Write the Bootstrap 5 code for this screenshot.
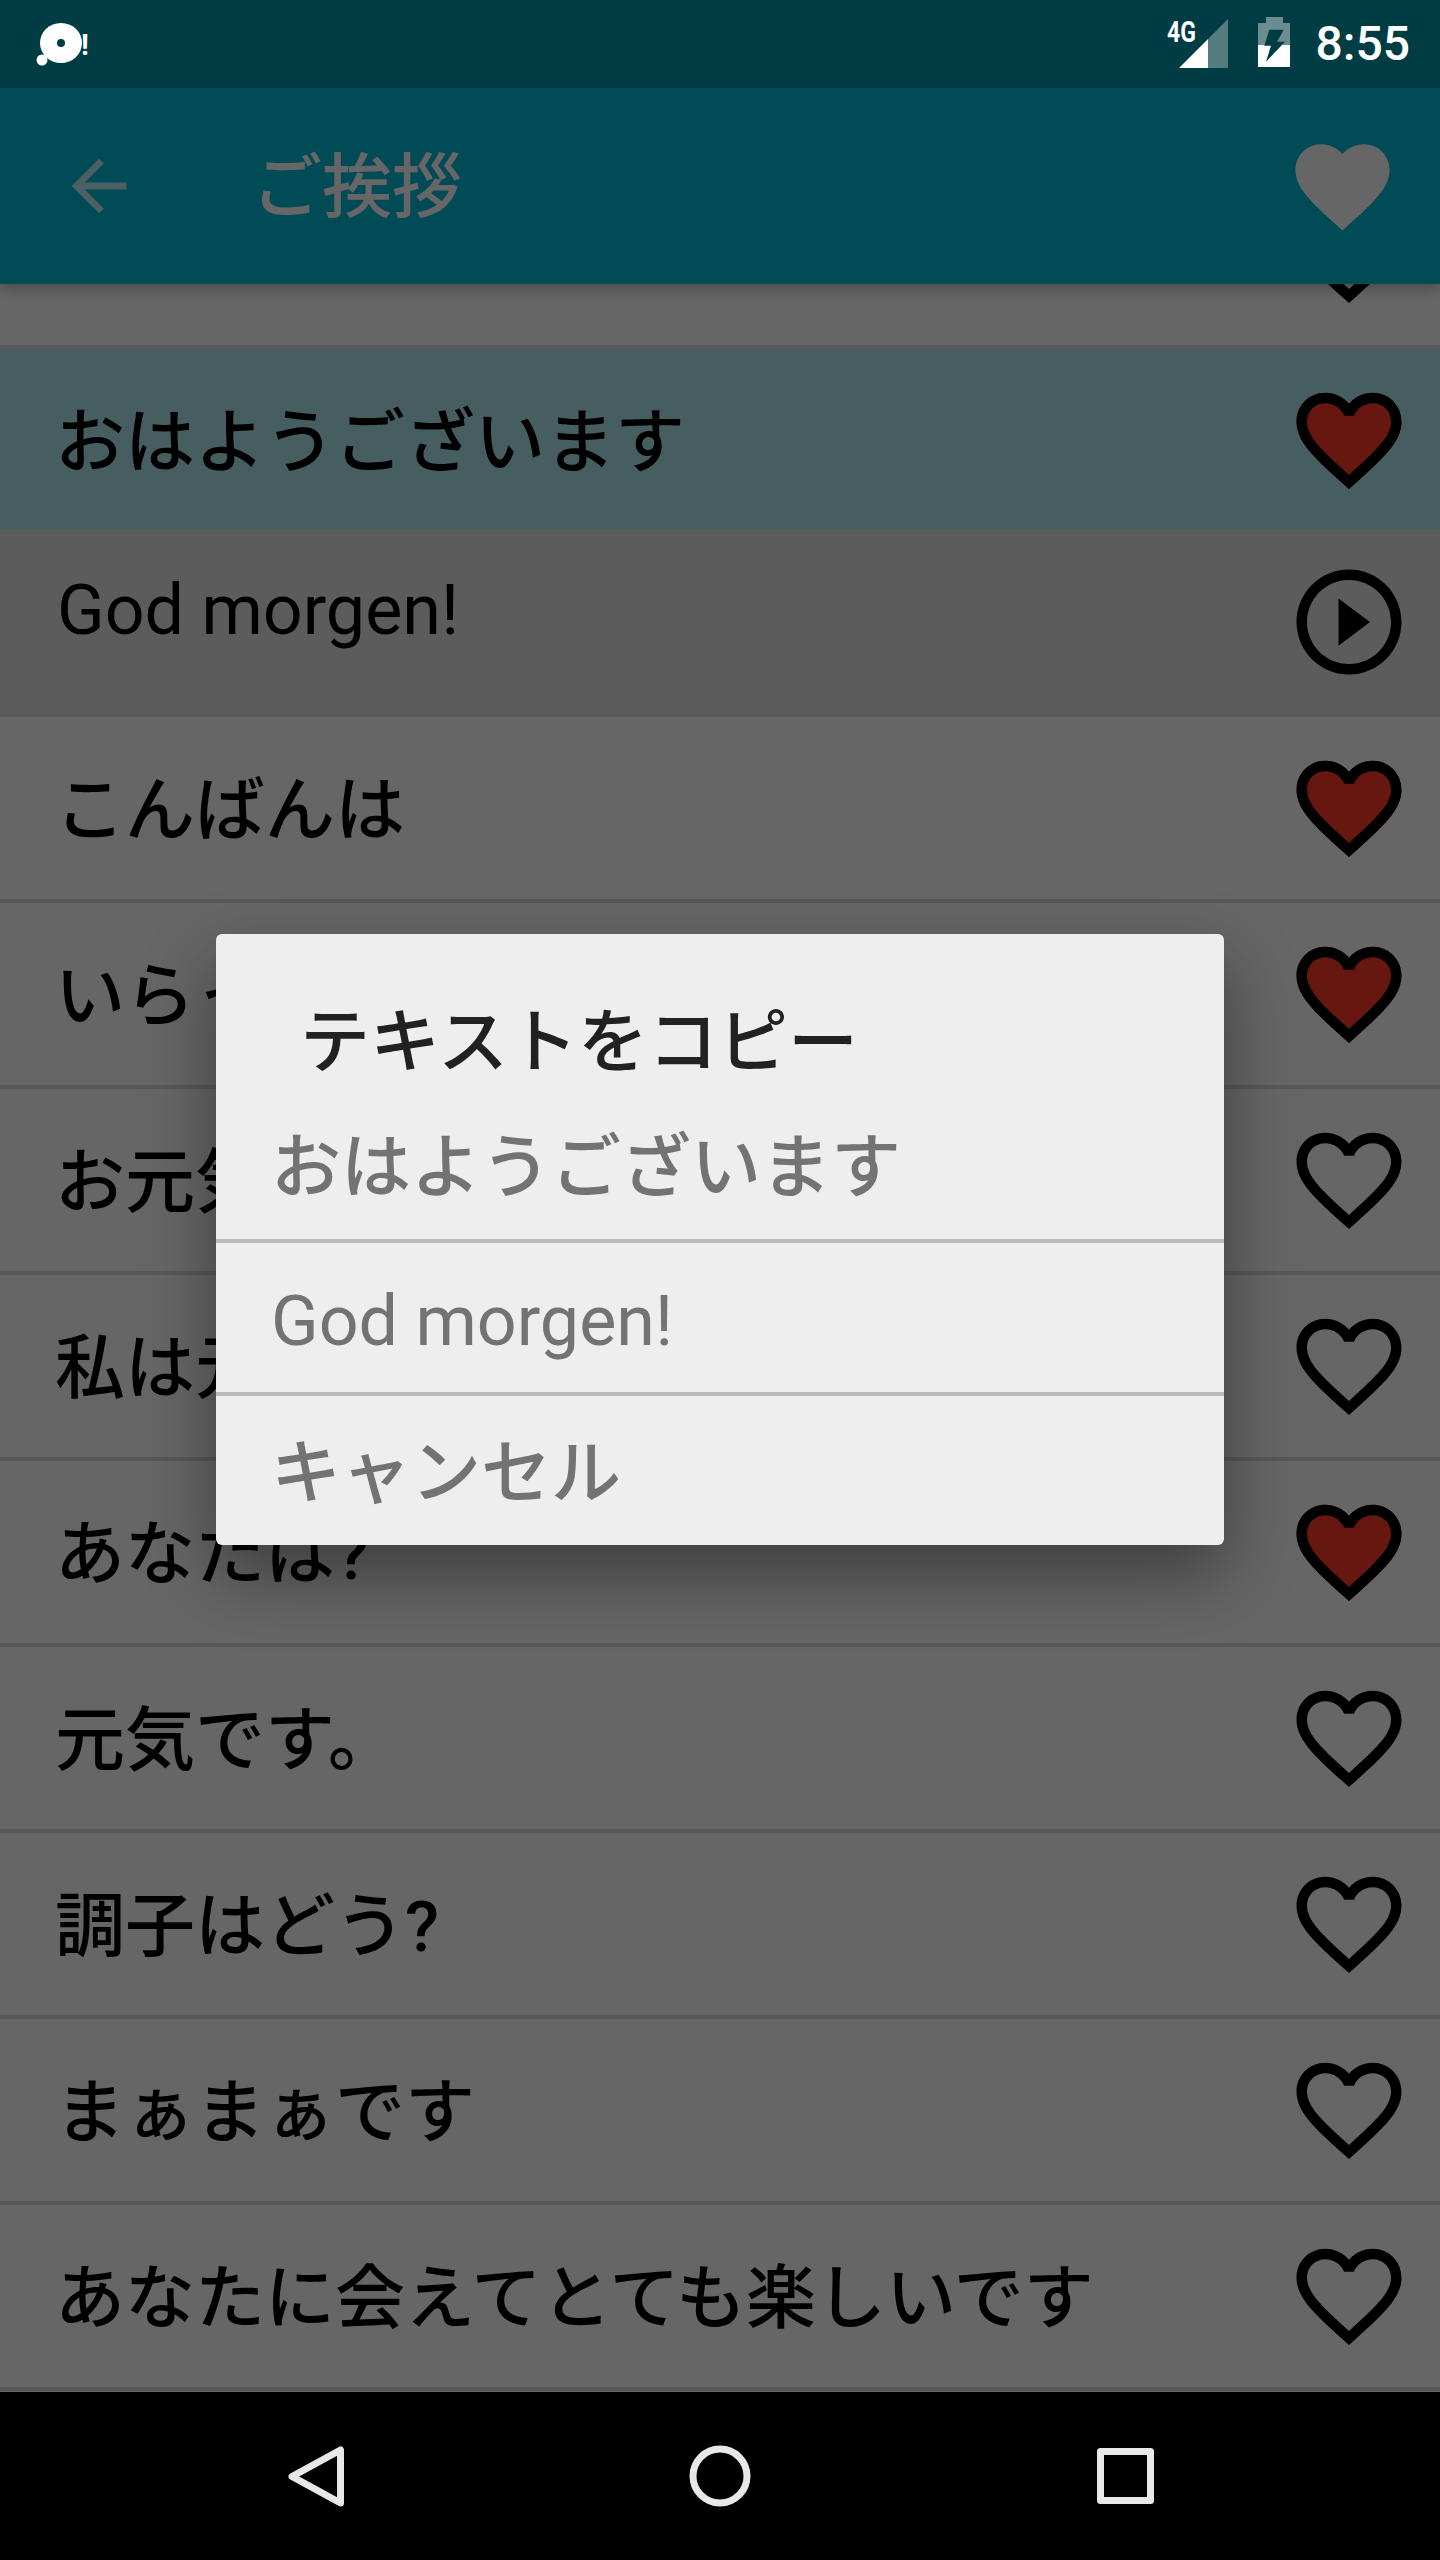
<!DOCTYPE html>
<html lang="ja">

<head>
  <meta charset="UTF-8">
  <title>ご挨拶</title>
  <meta name="viewport" content="width=device-width, initial-scale=1">
  <link href="https://cdn.jsdelivr.net/npm/bootstrap@5.3.3/dist/css/bootstrap.min.css" rel="stylesheet">
  <style>
    body {
      width: 1440px;
      height: 2560px;
      font-family: Roboto, "Noto Sans CJK JP", sans-serif;
      background-color: #000;
    }

    .status-bar {
      height: 88px;
      padding: 0 30px 0 34px;
      background-color: #003c43;
      color: #fff;
    }

    .status-clock {
      font-size: 48px;
      font-weight: 500;
      line-height: 1;
      margin-left: 26px;
    }

    .status-battery {
      margin-left: 27px;
      margin-top: -4px;
    }

    .status-signal {
      margin-top: -4px;
    }

    .screen {
      height: 2304px;
      background-color: #fff;
    }

    .app-bar {
      height: 196px;
      padding: 0 41px 0 58px;
      background-color: #00bcd4;
      box-shadow: 0 4px 14px rgba(0, 0, 0, 0.3);
      color: #fff;
      z-index: 1;
    }

    .app-title {
      font-size: 70px;
      font-weight: 500;
      line-height: 84px;
      margin-left: 112px;
      padding-top: 4px;
    }

    .phrase-list {
      margin-top: -121px;
      border-radius: 0;
    }

    .phrase-row {
      height: 186px;
      padding: 0 28px 0 55px;
      border: 0;
      border-bottom: 4px solid #ddd;
      border-radius: 0;
      background-color: #fff;
      color: #000;
      font-size: 70px;
      font-weight: 500;
      line-height: 84px;
    }

    .phrase-text {
      padding-top: 6px;
    }

    .phrase-row.row-active {
      height: 181px;
      border-bottom: 0;
      background-color: #b2ebf2;
    }

    .phrase-row.row-translation {
      height: 187px;
      background-color: #e6e6e6;
      font-weight: 400;
    }

    .row-translation .phrase-text {
      padding: 0 0 23px 2px;
    }

    .scrim {
      background-color: rgba(0, 0, 0, 0.6);
      z-index: 2;
    }

    .copy-dialog {
      width: 1008px;
      height: 611px;
      margin-bottom: 1px;
      border-radius: 6px;
      background-color: #eee;
      box-shadow: 0 30px 70px rgba(0, 0, 0, 0.4);
      font-size: 70px;
      font-weight: 500;
      line-height: 84px;
    }

    .copy-title {
      height: 156px;
      padding: 67px 0 0 84px;
      color: #212121;
    }

    .copy-option {
      height: 153px;
      padding: 6px 0 0 55px;
      color: #737373;
      border-bottom: 4px solid #b9b9b9;
    }

    .copy-option:last-child {
      height: 149px;
      border-bottom: 0;
    }

    .copy-option.option-latin {
      font-weight: 400;
    }

    .nav-bar {
      height: 168px;
      background-color: #000;
    }

    .nav-slot {
      width: 405px;
    }

    .nav-icon {
      fill: none;
      stroke: #e8e8e8;
      stroke-width: 7;
      stroke-linejoin: round;
    }
  </style>
</head>

<body class="d-flex flex-column overflow-hidden">
  <svg width="0" height="0" class="position-absolute">
    <symbol id="heart-line" viewBox="0 0 24 24">
      <path d="M16.5 3c-1.74 0-3.41.81-4.5 2.09C10.91 3.81 9.24 3 7.5 3 4.42 3 2 5.42 2 8.5c0 3.78 3.4 6.86 8.55 11.54L12 21.35l1.45-1.32C18.6 15.36 22 12.28 22 8.5 22 5.42 19.58 3 16.5 3zm-4.4 15.55l-.1.1-.1-.1C7.14 14.24 4 11.39 4 8.5 4 6.5 5.5 5 7.5 5c1.54 0 3.04.99 3.57 2.36h1.87C13.46 5.99 14.96 5 16.5 5c2 0 3.5 1.5 3.5 3.5 0 2.89-3.14 5.74-7.9 10.05z"/>
    </symbol>
    <symbol id="heart-red" viewBox="0 0 24 24">
      <path fill="#ff3b26" d="M12 21.35l-1.45-1.32C5.4 15.36 2 12.28 2 8.5 2 5.42 4.42 3 7.5 3c1.74 0 3.41.81 4.5 2.09C13.09 3.81 14.76 3 16.5 3 19.58 3 22 5.42 22 8.5c0 3.78-3.4 6.86-8.55 11.54L12 21.35z"/>
      <path d="M16.5 3c-1.74 0-3.41.81-4.5 2.09C10.91 3.81 9.24 3 7.5 3 4.42 3 2 5.42 2 8.5c0 3.78 3.4 6.86 8.55 11.54L12 21.35l1.45-1.32C18.6 15.36 22 12.28 22 8.5 22 5.42 19.58 3 16.5 3zm-4.4 15.55l-.1.1-.1-.1C7.14 14.24 4 11.39 4 8.5 4 6.5 5.5 5 7.5 5c1.54 0 3.04.99 3.57 2.36h1.87C13.46 5.99 14.96 5 16.5 5c2 0 3.5 1.5 3.5 3.5 0 2.89-3.14 5.74-7.9 10.05z"/>
    </symbol>
    <symbol id="play-line" viewBox="0 0 24 24">
      <path d="M10 16.5l6-4.5-6-4.5v9zM12 2C6.48 2 2 6.48 2 12s4.48 10 10 10 10-4.48 10-10S17.52 2 12 2zm0 18c-4.41 0-8-3.59-8-8s3.59-8 8-8 8 3.59 8 8-3.59 8-8 8z"/>
    </symbol>
  </svg>

  <!-- barra de status -->
  <div class="status-bar d-flex align-items-center flex-shrink-0">
    <svg width="60" height="46" viewBox="0 0 60 46" fill="#fff">
      <ellipse cx="27" cy="22" rx="21" ry="20"/>
      <circle cx="27" cy="22" r="4" fill="#003c43"/>
      <circle cx="8" cy="39" r="5.5"/>
      <text x="47" y="34" font-family="Roboto" font-weight="700" font-size="29">!</text>
    </svg>
    <svg class="status-signal ms-auto" width="70" height="56" viewBox="0 0 70 56" fill="#fff">
      <text x="6" y="28" font-family="Roboto" font-weight="700" font-size="29" textLength="29" lengthAdjust="spacingAndGlyphs">4G</text>
      <path d="M18 54L47 25V54z"/>
      <path d="M47 25L67 5V54H47z" opacity="0.33"/>
    </svg>
    <svg class="status-battery" width="32" height="50" viewBox="0 0 32 50" fill="#fff">
      <path d="M0 6H8V0H25V6H32V28H0z" opacity="0.42"/>
      <path d="M0 28H32V50H0z"/>
      <path d="M11.3 12.7H25.7L19 24.7H27L8 44.7L13 28.7H6.3z" fill="#003c43"/>
    </svg>
    <span class="status-clock">8:55</span>
  </div>

  <div class="screen position-relative overflow-hidden flex-shrink-0">
    <header class="app-bar position-relative d-flex align-items-center">
      <svg width="82" height="82" viewBox="0 0 24 24" fill="#fff" opacity="0.75">
        <path d="M20 11H7.83l5.59-5.59L12 4l-8 8 8 8 1.41-1.41L7.83 13H20v-2z"/>
      </svg>
      <span class="app-title">ご挨拶</span>
      <svg class="ms-auto" width="113" height="113" viewBox="0 0 24 24" fill="#fff">
        <path d="M12 21.35l-1.45-1.32C5.4 15.36 2 12.28 2 8.5 2 5.42 4.42 3 7.5 3c1.74 0 3.41.81 4.5 2.09C13.09 3.81 14.76 3 16.5 3 19.58 3 22 5.42 22 8.5c0 3.78-3.4 6.86-8.55 11.54L12 21.35z"/>
      </svg>
    </header>

    <ul class="phrase-list list-group">
      <li class="list-group-item phrase-row d-flex align-items-center justify-content-between">
        <span class="phrase-text">こんにちは</span>
        <svg width="126" height="126"><use href="#heart-line"/></svg>
      </li>
      <li class="list-group-item phrase-row row-active d-flex align-items-center justify-content-between">
        <span class="phrase-text">おはようございます</span>
        <svg width="126" height="126"><use href="#heart-red"/></svg>
      </li>
      <li class="list-group-item phrase-row row-translation d-flex align-items-center justify-content-between">
        <span class="phrase-text">God morgen!</span>
        <svg width="126" height="126"><use href="#play-line"/></svg>
      </li>
      <li class="list-group-item phrase-row d-flex align-items-center justify-content-between">
        <span class="phrase-text">こんばんは</span>
        <svg width="126" height="126"><use href="#heart-red"/></svg>
      </li>
      <li class="list-group-item phrase-row d-flex align-items-center justify-content-between">
        <span class="phrase-text">いらっしゃいませ</span>
        <svg width="126" height="126"><use href="#heart-red"/></svg>
      </li>
      <li class="list-group-item phrase-row d-flex align-items-center justify-content-between">
        <span class="phrase-text">お元気ですか</span>
        <svg width="126" height="126"><use href="#heart-line"/></svg>
      </li>
      <li class="list-group-item phrase-row d-flex align-items-center justify-content-between">
        <span class="phrase-text">私は元気です</span>
        <svg width="126" height="126"><use href="#heart-line"/></svg>
      </li>
      <li class="list-group-item phrase-row d-flex align-items-center justify-content-between">
        <span class="phrase-text">あなたは?</span>
        <svg width="126" height="126"><use href="#heart-red"/></svg>
      </li>
      <li class="list-group-item phrase-row d-flex align-items-center justify-content-between">
        <span class="phrase-text">元気です。</span>
        <svg width="126" height="126"><use href="#heart-line"/></svg>
      </li>
      <li class="list-group-item phrase-row d-flex align-items-center justify-content-between">
        <span class="phrase-text">調子はどう?</span>
        <svg width="126" height="126"><use href="#heart-line"/></svg>
      </li>
      <li class="list-group-item phrase-row d-flex align-items-center justify-content-between">
        <span class="phrase-text">まぁまぁです</span>
        <svg width="126" height="126"><use href="#heart-line"/></svg>
      </li>
      <li class="list-group-item phrase-row d-flex align-items-center justify-content-between">
        <span class="phrase-text">あなたに会えてとても楽しいです</span>
        <svg width="126" height="126"><use href="#heart-line"/></svg>
      </li>
    </ul>

    <!-- dialogo por cima da lista -->
    <div class="scrim position-absolute top-0 start-0 w-100 h-100 d-flex align-items-center justify-content-center">
      <div class="copy-dialog d-flex flex-column">
        <div class="copy-title">テキストをコピー</div>
        <div class="copy-option d-flex align-items-center"><span>おはようございます</span></div>
        <div class="copy-option option-latin d-flex align-items-center"><span>God morgen!</span></div>
        <div class="copy-option d-flex align-items-center"><span>キャンセル</span></div>
      </div>
    </div>
  </div>

  <!-- botoes do sistema -->
  <nav class="nav-bar d-flex justify-content-center align-items-center flex-shrink-0">
    <div class="nav-slot d-flex justify-content-center">
      <svg class="nav-icon" width="80" height="80"><path d="M65.5 14V67L17 40.5z"/></svg>
    </div>
    <div class="nav-slot d-flex justify-content-center">
      <svg class="nav-icon" width="80" height="80"><circle cx="40" cy="40" r="27"/></svg>
    </div>
    <div class="nav-slot d-flex justify-content-center">
      <svg class="nav-icon" width="80" height="80"><rect x="15.5" y="15.5" width="50" height="49"/></svg>
    </div>
  </nav>

  <script src="https://cdn.jsdelivr.net/npm/bootstrap@5.3.3/dist/js/bootstrap.bundle.min.js"></script>
</body>

</html>
